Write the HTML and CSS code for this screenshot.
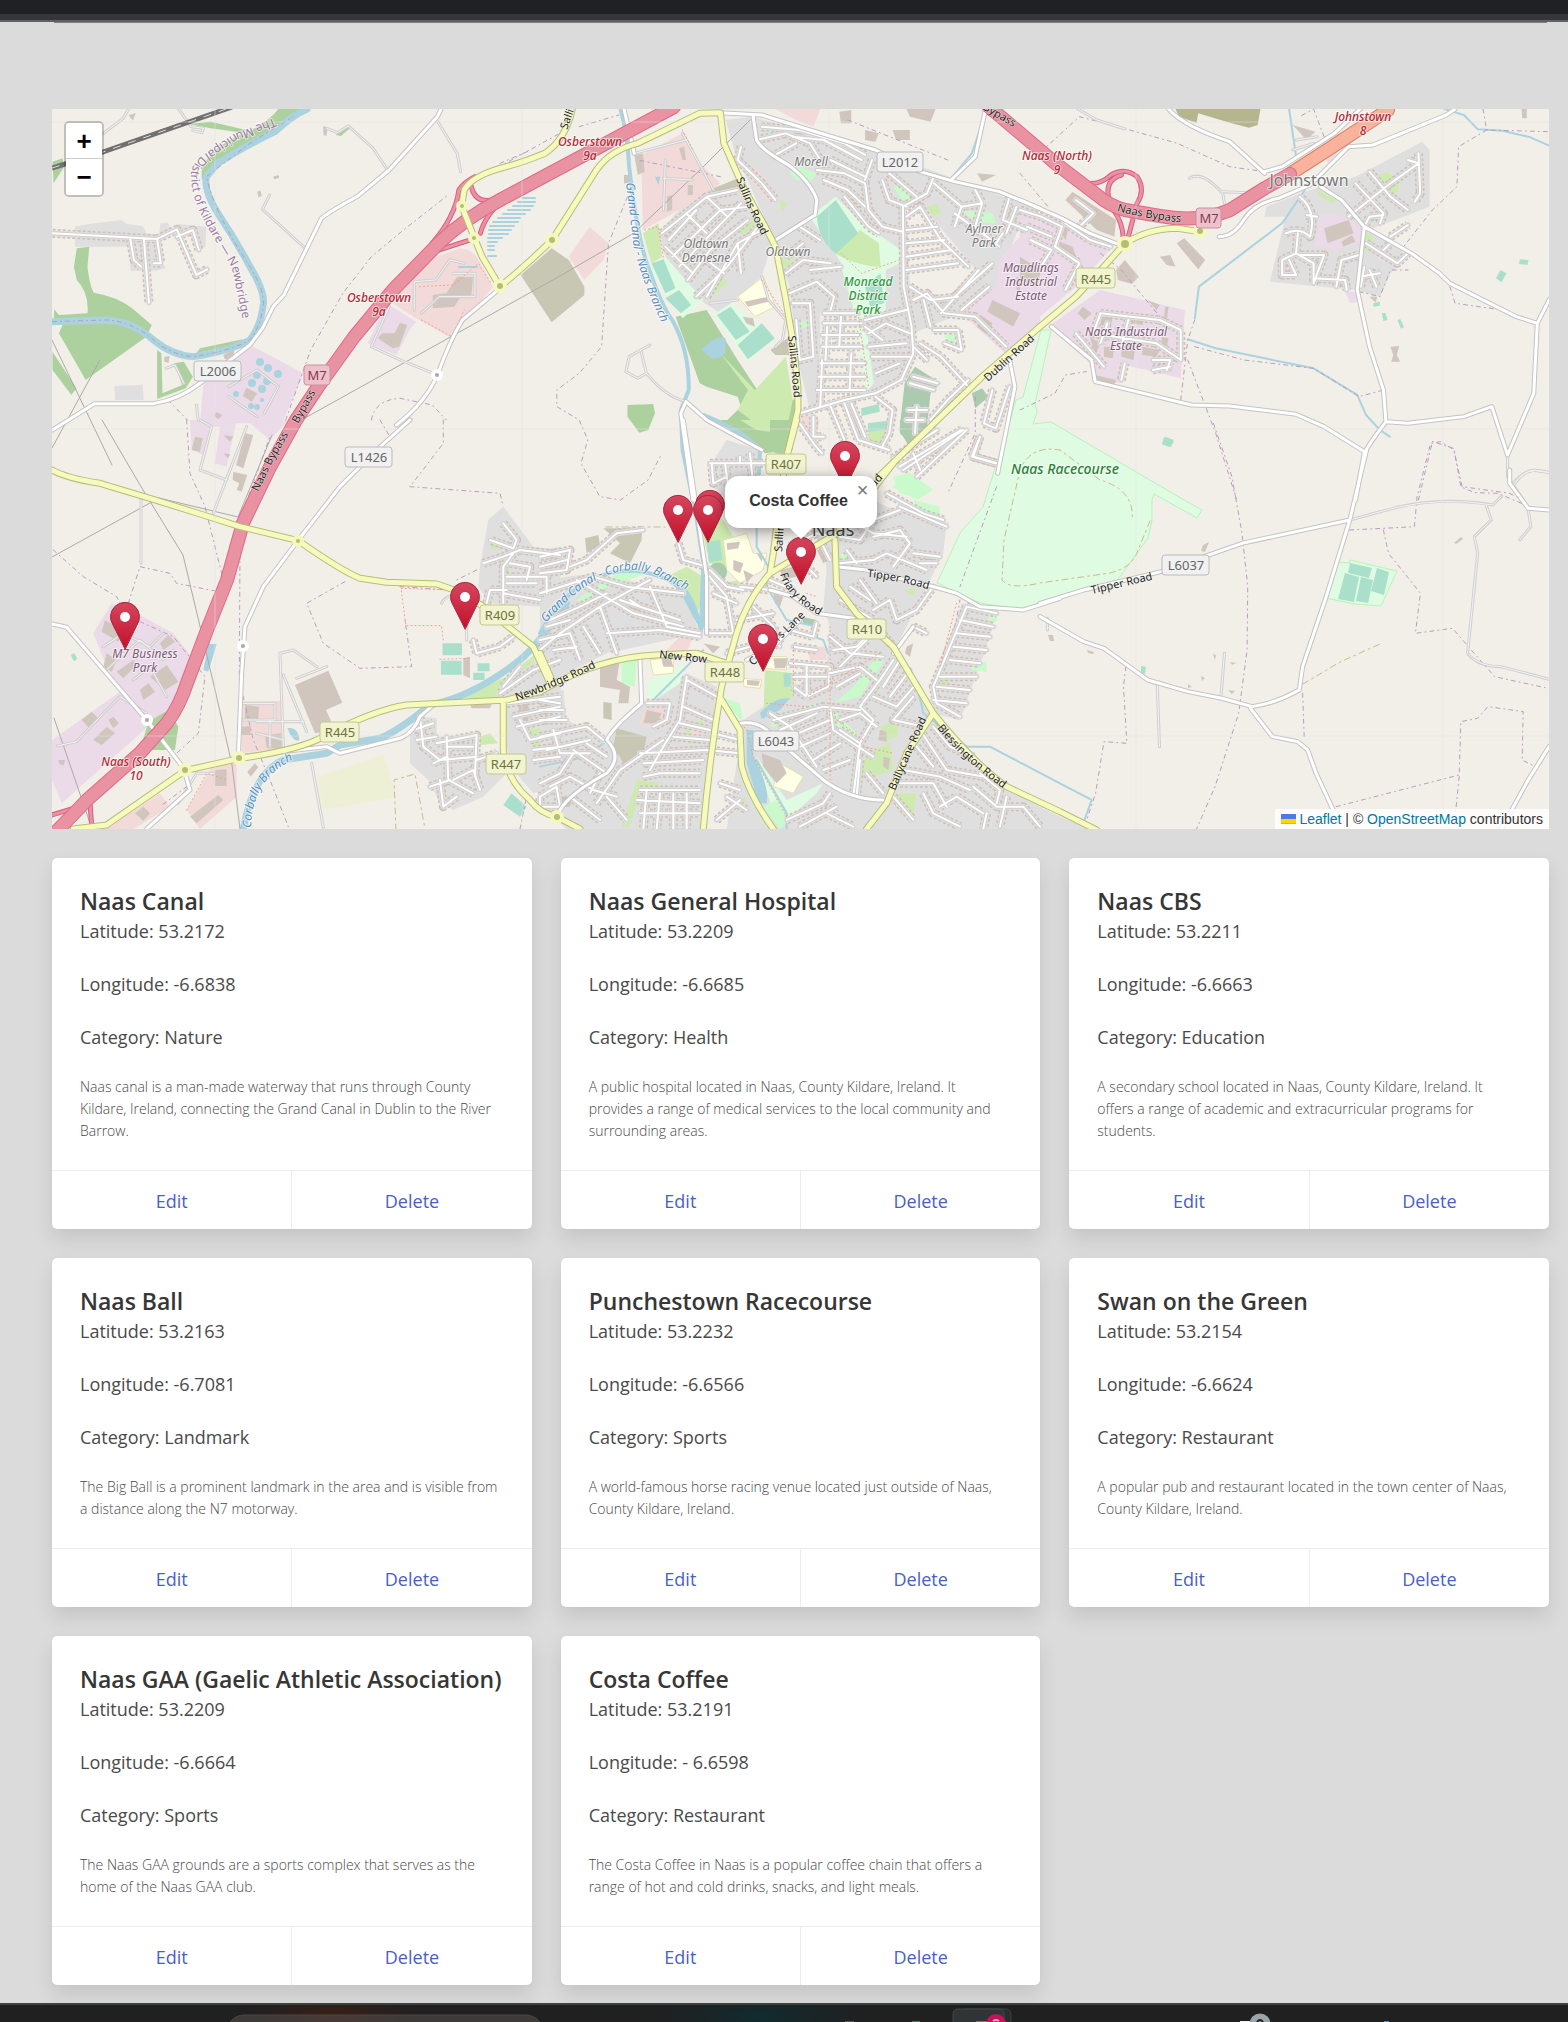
FILE: index.html
```html
<!DOCTYPE html>
<html lang="en">
<head>
<meta charset="utf-8">
<meta name="viewport" content="width=device-width, initial-scale=1">
<title>Naas places</title>
<link rel="stylesheet" href="styles.css">
</head>
<body>
<div class="browser-edge"><div class="browser-tabs"></div><div class="browser-line"></div></div>
<main class="page">
<div class="hero-edge"></div>
<section class="map" aria-label="Map of Naas">
<svg class="map-canvas" viewBox="52 109 1497 720" preserveAspectRatio="xMidYMid slice" role="img" aria-label="Street map">
<defs>
<linearGradient id="pin-fill" x1="0" y1="0" x2="0" y2="1"><stop offset="0" stop-color="#d5475e"/><stop offset="1" stop-color="#c3102a"/></linearGradient>
<g id="pin"><path d="M0 0L-12 -24A14.500 14.500 0 1 1 12 -24Z" fill="url(#pin-fill)" stroke="#a92840" stroke-width="1"/><circle cy="-32" r="5" fill="#fff"/></g>

<g id="streets">
<g transform="scale(.3571 .3333)"><path d="M147 700L440 717L495 688L550 825L580 808M403 717L417 908M495 710L540 690L557 750M365 717L375 780L395 800M440 717L450 790L430 790"/></g>
<g transform="translate(500 100) scale(.3444 .3333)"><path d="M470 400L530 350L600 290L690 270M490 420L570 330M500 470L640 330L720 320M520 500L700 310M545 540L610 450L720 360M570 590L660 500L745 385M600 590L690 430L760 390M690 430L700 520M540 340L600 400M600 290L660 350M480 440L560 520M600 480L650 520M700 140L690 180L760 250L800 300M745 120L830 100L900 130L930 180M790 170L860 130M760 80L870 90L1000 130L1060 165M850 110L940 120L1050 180M920 210L1000 220L1060 250L1070 330L1110 380L1170 395M940 240L1010 270L1060 320M1000 290L1070 380L1100 400M960 180L1060 230M1080 180L1060 240M1110 240L1130 300L1180 320M1130 220L1210 290M1170 320L1172 560L1195 680L1200 760L1165 840M1170 320L1240 280L1260 230M1260 250L1340 320L1400 310M1320 340L1440 430L1460 400M1340 320L1320 380M1400 310L1380 380L1450 440M1480 290L1460 360L1530 390M1380 270L1400 310M1500 320L1470 400M1180 350L1220 320L1280 420L1360 500M1180 390L1270 380M1180 430L1290 420M1180 470L1310 450M1180 510L1330 490M1190 560L1250 600L1330 590M1200 600L1240 580L1290 640L1380 650L1470 740M1230 600L1250 680M1260 690L1330 690L1340 750L1290 730M1220 730L1280 770L1360 860M1240 780L1200 740M1280 640L1390 510M1320 590L1430 490M1340 630L1420 560M830 520L880 480L960 490M840 580L920 545L970 590L960 630M850 610L900 610L910 770M860 660L870 780L910 770M880 430L830 470M870 380L930 420M900 510L990 500M1060 660L1180 630M1070 700L1120 670L1190 700M1070 740L1180 730M1080 770L1190 770M1090 820L1160 790M1060 680L1110 720M940 640L1040 640M940 670L1050 670M935 705L1040 705M935 740L1050 740M930 790L1060 790M925 830L1060 830M920 870L1060 870M950 680L945 780M990 650L985 740M1020 760L1015 870M870 940L1000 900L1090 880L1165 840M935 780L930 920M960 920L1000 1020M1000 910L1040 1020L1130 1050M1020 910L1060 1010M1090 890L1140 930L1130 1000L1110 1040M1140 1075L1270 990M1160 1100L1340 990M1200 1060L1220 1110M910 950L910 1010L940 1010M870 970L910 1030L935 1060M1390 1020L1370 1070L1440 1090M1430 870L1405 970L1440 985L1480 860M1360 840L1300 900L1250 960M1185 930L1240 930M1180 960L1230 960M1200 830L1270 850M1190 850L1260 870M1210 920L1205 1000"/></g>
<g transform="translate(1020 100) scale(.3495 .3333)"><path d="M1000 215L1060 290L1110 330M940 350L1060 250M960 250L1040 340L1030 370M1060 250L1140 190L1110 180M1140 160L1145 280L1130 305M1040 345L1000 350L985 380M990 430L1080 490L1110 460M1040 450L1060 430M760 400Q800 380 830 410Q850 330 800 290M795 400L790 460L840 490L840 550M790 460L750 480L750 525L790 525L770 480M840 550L870 465L800 465M840 535L930 540L935 570M905 560L920 480L970 465M970 530L1030 520M1000 510L1020 560M975 560L985 500M820 345L850 350M1060 410L1110 375M0 330L60 350L120 380L100 440M20 380L90 410M30 420L90 450L60 500M130 370L200 420L260 440M100 440L170 490L130 570M160 300L210 340L170 380M230 640L400 660L460 690L460 780M230 640L210 700L390 730L460 780M250 670L230 730M310 660L290 740M380 780L430 780L420 810M380 810L430 800M290 840L300 790M160 700L240 800"/></g>
<g transform="translate(40 420) scale(.3333)"><path d="M1390 310L1430 360L1420 385L1350 360M1330 430L1390 410L1440 390L1560 405M1390 550L1390 440L1420 400M1400 470L1520 470L1520 520M1400 490L1490 490M1410 430L1470 440L1460 480M1340 550L1350 510L1400 510M1390 520L1500 540M1300 660L1310 700L1380 680L1420 650M1380 820L1480 750L1560 720M1390 800L1440 740M1500 690L1560 640M1400 850L1560 830M1420 890L1560 860M1430 920L1560 890M1470 960L1560 940M1480 990L1560 980M1480 1020L1560 1010M1440 900L1470 960M1500 1130L1550 1100L1560 1160L1500 1160ZM1120 930L1180 910M1130 960L1190 950M1140 890L1150 980L1200 1020L1310 1010M1220 950L1225 1080L1300 1120M1180 1030L1220 1010M1190 970L1310 945L1305 1070M1170 1100L1230 1080M1200 1080L1210 1160L1250 1130M1240 1080L1300 1050L1320 1110M1220 980L1300 980M1310 1020L1370 1000"/></g>
<g transform="translate(540 420) scale(.3333)"><path d="M0 520L160 470L260 500L430 520M30 600L120 560L200 520M60 640L180 560L330 480M110 480L280 580L430 620M130 620L180 700M180 560L230 700M330 500L380 620L480 640M240 540L420 600M0 660L90 640L120 720M20 620L90 600M40 690L110 680M200 640L360 630L480 650M270 540L300 560M0 410L90 390L80 450L0 460M0 440L80 420M90 440L140 420L230 340L310 330M415 370L430 420L500 440M500 460L560 530L580 640L500 640M510 130L680 130M515 130L520 190L560 170M555 130L565 200M600 130L600 110M630 100L640 200M510 450L560 500L610 510M520 520L590 550M600 500L690 510M640 560L700 620L720 670M590 600L700 580M560 700L700 660L720 680M690 480L760 510M800 440L830 470M750 380L830 340L880 350M840 360L870 420M900 350L960 360L1000 300L1080 270M1000 350L1080 330L1110 370L1060 440M930 300L1000 340L1100 350M1120 400L1200 410M1140 430L1190 430M900 430L1000 420L1040 400L1160 450M920 390L950 430M1080 260L1220 320M1040 220L1150 280L1210 300M930 500L990 540M960 480L1010 550M1000 570L1050 540L1070 600L1130 570L1180 500M900 540L1000 600M870 650L930 700L1030 710M880 690L950 680L990 640M870 760L960 740L1010 780M890 800L960 760M750 630L820 650L830 610M750 730L870 740L865 800L800 830L760 800M800 740L800 830M760 770L860 770M760 680L830 690M1000 610L1060 680M1060 720L1020 780L960 860M980 660L900 740M1080 720L1030 800M1110 750L1050 830M1130 790L1070 860L1000 830M1120 830L1060 900L1150 920M960 860L1000 900L960 970M900 900L960 880L1010 920M900 930L960 970L940 1130M870 860L880 930L1000 1010M700 900L850 860L960 870M720 930L830 880M750 950L870 900M780 980L870 940M820 1020L900 970M850 1050L930 1020M690 880L750 920L830 1040M1280 560L1370 580M1260 600L1360 620M1250 640L1350 650M1240 680L1340 690M1230 720L1320 730M1200 770L1310 770M1190 800L1290 810M1180 840L1280 850M1280 560L1180 800L1190 850L1260 890M1180 920L1230 980L1300 1010M1140 930L1220 1050L1330 1070M1130 980L1180 1040M1090 1050L1200 1070L1290 1110M1080 1090L1180 1090L1220 1160M1060 1130L1120 1200M1150 1120L1180 1180L1260 1220M1200 1160L1250 1130L1330 1180M1320 1060L1380 1110L1370 1150M1300 1100L1370 1160L1450 1160L1500 1220M1400 1130L1380 1220M1340 1180L1330 1227M960 1020L950 1130M980 1060L1030 1120M0 840L60 850M0 870L70 870M0 900L80 900M0 950L140 920L190 960M20 990L150 960M40 930L60 1000L150 1000M0 1090L60 1060L100 1000M30 1100L90 1070L160 1110L230 1130M90 1130L180 1200M100 990L200 1060M140 970L200 1010M150 1120L180 1060M170 1150L240 1050L370 960M200 1130L260 1200M300 1000L500 990M310 1030L490 1020M310 1070L360 1060L480 1060M300 1110L480 1110M290 1140L480 1150M300 1180L480 1180M320 1110L310 1227M360 1120L350 1227M400 1120L400 1227M440 1120L440 1227M440 770L420 900L370 980L330 1050M440 780L530 830M430 860L520 900M420 910L510 930M400 950L510 960M320 850L390 850L380 900L340 920M530 1200L600 1140M540 1090L600 1110M560 1130L620 1170M740 1200L850 1150L870 1120M780 1220L890 1160M860 1180L940 1220M500 990L600 1000M520 940L600 960M1090 150L1270 30M1130 170L1280 30M1320 50L1300 110L1370 130M1120 620L1160 640"/></g>
</g>

<g id="local-roads">
<g transform="scale(.3571 .3333)"><path d="M290 400L345 355L360 327M500 327L535 380L570 385L565 398L540 392M1220 355L1280 460L1290 515M915 385L945 398L975 378L1045 445L1085 510M855 745L735 628L755 585M1225 1125L1125 1082L1040 1040L1090 920M1160 930L1160 845L1220 840L1260 780L1300 790M1180 940L1230 890L1330 890L1330 820L1270 820M465 1105L490 1095L515 1150M550 1215L555 1260M640 1160L720 1110L780 1160L740 1240M640 1190L720 1250"/></g>
<g transform="translate(500 100) scale(.3444 .3333)"><path d="M435 735L375 770L365 815L400 835L425 820L410 755M425 820Q480 890 540 905M390 160L540 120M480 180L475 330M475 235L560 240M530 100L620 270M760 530L780 600L830 660L820 720L800 740M610 610L690 600"/></g>
<g transform="translate(1020 100) scale(.3495 .3333)"><path d="M485 235Q520 210 580 280L585 310M580 275L650 278L710 240M165 27L220 60L300 87M1410 1160Q1440 1110 1475 1112L1514 1118M1395 1065L1395 1130L1440 1200M790 120L850 110M780 150L840 130"/></g>
<g transform="translate(40 420) scale(.3333)"><path d="M303 240L303 430M815 1030L850 1222M1205 550Q1210 530 1260 520M1280 580L1280 660M480 0L515 20L480 150L560 180M620 20L520 280M190 680L250 640L330 680L370 640M230 720L300 660L370 720L400 690M280 780L330 740L380 830M200 750L250 700M52 978L110 965L190 880L240 830L320 880M720 700L760 690L830 740M720 700L730 980M730 765L800 935M770 775L860 740M610 850L705 850L705 900L610 900M650 905L790 905M650 940L730 960M690 900L690 980M415 1150L470 1060L520 1060"/></g>
<g transform="translate(1040 420) scale(.3367 .3333)"><path d="M920 300L1060 262Q1200 230 1345 255L1370 230M1325 255L1340 300L1290 350L1300 400L1270 700Q1300 740 1370 740L1512 778M1450 270L1458 320L1425 360M1405 190Q1440 150 1470 150L1512 157M348 790L355 980M548 700L537 835M22 595L22 630"/></g>
</g>

<g id="white-roads">
<g transform="scale(.3571 .3333)"><path d="M147 1290L265 1211L430 1211Q500 1200 560 1150L700 1035L735 985L765 920L795 885L900 655Q930 630 1000 590L1090 510L1225 350L1235 327M1110 1275Q1190 1210 1225 1125Q1260 1020 1295 960L1400 865"/></g>
<g transform="translate(500 100) scale(.3444 .3333)"><path d="M735 50L745 120Q760 150 830 190Q900 240 920 300L915 345L800 420M640 38L760 45L900 90L1090 150L1220 215L1320 245L1450 275L1568 325M360 27L390 160M540 905L525 940L560 1200M540 905L600 960L760 1050M1480 780L1495 860L1445 1120M1410 27L1380 170L1310 240"/></g>
<g transform="translate(1020 100) scale(.3495 .3333)"><path d="M0 300L120 355L200 400L275 430M570 410Q610 410 640 360Q670 310 740 295L830 255L940 140L1010 135L1220 45L1245 27M700 215L750 200L900 100L990 10M425 27Q470 80 600 125L700 220M985 380L1120 460L1200 520L1230 550L1420 650L1480 670M1514 600L1480 670L1470 880L1395 1065M985 380L965 570L1000 740L1040 870L1047 965Q1000 1030 985 1060L960 1200M90 680L205 780L215 845L490 915L600 918L790 943L870 980L985 1055M1047 965L1110 970L1270 950L1350 920L1395 1065M860 260L920 300L985 380"/></g>
<g transform="translate(40 420) scale(.3333)"><path d="M1110 0L1010 90L900 200L775 360L670 500L615 620L605 760L595 1015M36 612L80 622L320 900L435 1050M435 1060L450 1110L320 1227M600 1010L860 980L900 1000L1080 955Q1120 940 1140 890L1180 855"/></g>
<g transform="translate(540 420) scale(.3333)"><path d="M890 440L980 450L1180 500L1250 520L1320 560L1450 570L1560 535M600 910Q660 900 700 950L850 1080Q930 1140 1030 1140M300 720L305 850Q220 920 200 960Q250 1010 200 1060Q90 1120 60 1170M1060 700L1120 620M430 0L500 470L500 640M690 510L760 530L830 580L940 595M620 720L700 680L780 600"/></g>
<g transform="translate(1040 420) scale(.3367 .3333)"><path d="M0 550L130 510L360 455L600 370L920 300M970 90L920 300L850 530L780 740L770 810Q700 850 630 860L540 835L440 815L320 780L190 685L130 665L0 590M1395 150L1395 190L1450 265L1512 270M625 865L690 950L765 965L795 990L820 1060L880 1190M1512 980L1450 1080L1370 1227"/></g>
</g>

<g id="yellow-roads">
<g transform="scale(.3571 .3333)"><path d="M1400 505Q1320 530 1300 570L1293 618L1328 713L1350 770L1400 860"/></g>
<g transform="translate(500 100) scale(.3444 .3333)"><path d="M210 27Q190 120 130 160Q60 190 0 205M0 560Q60 510 150 422L280 210Q320 150 400 130Q500 80 580 40L640 38L650 130L710 270L770 380L800 440L830 600L850 720L865 860L865 930L835 1060M1568 680L1400 830L1250 980L1100 1130"/></g>
<g transform="translate(1020 100) scale(.3495 .3333)"><path d="M300 430L240 500L160 590L80 660L50 686M300 430Q370 385 450 385L515 395"/></g>
<g transform="translate(40 420) scale(.3333)"><path d="M36 150Q80 175 180 190L330 235L490 285L600 320L775 362Q900 450 960 475L1040 487L1190 492L1270 520L1330 560Q1380 600 1480 680L1530 790M100 1227L200 1215L435 1052L600 1015Q780 990 850 950Q1000 870 1100 855L1400 840L1500 815M1390 845L1390 990Q1400 1080 1470 1140Q1500 1180 1550 1190"/></g>
<g transform="translate(540 420) scale(.3333)"><path d="M0 815Q180 710 350 705L470 700L560 730M50 1190L120 1227M0 700L40 790M770 0L735 130L700 400L690 460M1060 130L990 220L890 340L690 460Q620 540 590 640L545 800Q510 1000 490 1227M545 840L600 930L605 1040Q630 1130 700 1227M885 360L890 500L950 580L1060 680L1180 880Q1300 1030 1400 1100L1560 1175L1670 1230M1180 880L1100 1000L1040 1150L980 1227"/></g>
</g>
<g id="ramps">
<g transform="scale(.3571 .3333)"><path d="M1210 730Q1275 650 1285 570Q1300 545 1330 530M1320 560Q1330 610 1380 600L1500 535M1200 760L1330 715M1345 700Q1360 640 1420 590"/></g>
<g transform="translate(1020 100) scale(.3495 .3333)"><path d="M190 250Q230 255 260 225Q300 200 335 230Q360 270 335 310L310 410M255 300Q240 240 290 225M220 290Q290 330 295 410"/></g>
<g transform="translate(40 420) scale(.3333)"><path d="M36 1185L150 1150M150 1150L155 1215"/></g>
</g>
<path id="motorway" d="M674 107L500 200Q464 219 439 243L393 290L354 337L318 387L296 420L270 467L243 523L227 580L207 630L187 683Q180 705 167 723L140 753L87 800L56 832M988 106L1040 150L1055 163L1097 195Q1110 206 1125 210L1160 216Q1200 223 1230 210L1265 188L1290 174"/>
<path id="trunk" d="M1290 174L1335 145L1388 110"/>

<path id="t-municipal" d="M274 118L232 135L206 153Q189 164 191 180Q193 202 208 228L232 268L246 335"/>
<path id="t-sallins-a" d="M736 179L748 208L764 240"/>
<path id="t-sallins-b" d="M788 336L796 420"/>
<path id="t-naas-bypass" d="M258 492L274 459L302 412"/>
<path id="t-bypass" d="M298 424L322 381"/>
<path id="t-north-bypass" d="M1117 211Q1145 219 1195 224"/>
<path id="t-dublin" d="M988 382L1042 333"/>
<path id="t-tipper-a" d="M867 577Q900 580 940 593"/>
<path id="t-tipper-b" d="M1092 594L1164 577"/>
<path id="t-newbridge" d="M517 701Q550 690 620 656"/>
<path id="t-friary" d="M780 574Q786 600 832 622"/>
<path id="t-corban" d="M753 666L814 608"/>
<path id="t-ballycane" d="M895 791L934 702"/>
<path id="t-blessington" d="M937 728Q965 764 1020 800"/>
<path id="t-corbally-a" d="M546 623Q600 560 650 572L700 597"/>
<path id="t-naas-branch" d="M626 183L634 250Q645 290 670 340"/>
<path id="t-corbally-b" d="M251 828Q252 775 300 757"/>
</defs>

<rect x="52" y="109" width="1497" height="720" fill="#f2efe9"/>

<g class="land">
<g transform="scale(.3571 .3333)">
<path class="wood" d="M215 745L250 740L245 800Q250 850 262 878Q330 890 370 925L425 975L410 1010L240 1140L165 1000L175 975L150 970L152 928L165 945L245 940Q250 880 215 840L207 800ZM147 1055L214 1165L200 1185L147 1110ZM440 1050L452 1060L455 1180L510 1155L488 1090L515 1085L540 1130L520 1165L440 1197ZM780 327L860 327L770 400L690 430L590 500L565 540L565 500Q600 440 660 410Q740 380 780 327ZM530 372L590 365L690 390L680 398L590 385ZM147 485L175 475L180 500L150 550ZM550 1060L560 1045L680 1018L680 1030ZM940 405L975 378L980 385L955 408Z"/>
<path class="residential" d="M210 680L250 672L340 660L355 672L400 678L410 700L445 705L450 670L470 668L480 690L500 672L578 680L575 740L550 755L535 700L500 700L445 720L455 790L465 805L435 812L365 812L365 740L210 740ZM320 1158L400 1154L402 1200L322 1200Z"/>
<path class="industrial" d="M700 1035L850 1120L790 1270L560 1270L570 1150L640 1080ZM1080 908L1165 965L1150 985L1110 1065L1030 1030Z"/>
<path class="commercial" d="M1290 745Q1330 750 1345 790L1380 860L1265 1015L1165 955L1085 900L1220 770Z"/>
<path class="building" d="M1280 830L1325 832L1320 885L1290 890L1272 920L1212 925L1212 885L1250 880ZM1105 1000L1120 968L1140 975L1118 1040L1100 1045L1058 1015L1070 1000ZM690 1163L720 1180L705 1205L680 1188ZM605 1235L622 1245L612 1258L600 1248ZM765 530L780 525L782 533L768 538ZM720 575L730 572L733 588L724 592ZM625 1065L655 1050L655 1080L630 1078ZM460 1070L475 1068L472 1088L460 1085ZM360 345L380 340L372 362ZM905 378L918 382L914 408L906 405Z"/>
</g>
<g transform="translate(500 100) scale(.3444 .3333)">
<path class="residential" d="M655 60L730 50L1100 150L1250 210L1568 330L1500 400L1440 560L1340 640L1200 700L1190 830L1100 880L1050 900L900 930L865 780L840 560L800 430L680 150ZM460 400L520 330L620 260L700 240L790 430L760 530L690 590L640 640L580 600L500 540Z"/>
<path class="plain" d="M930 640L1030 640L1060 880L930 920ZM1180 330L1220 310L1390 520L1320 600L1190 560Z"/>
<path class="commercial" d="M410 165L530 100L560 170L640 250L520 330L415 390ZM710 215L745 205L800 280L780 305ZM200 470L260 380L315 430L300 480L245 540ZM870 950L900 945L900 990L875 990ZM800 27L930 27L910 80L860 60Z"/>
<path class="wood" d="M510 650L600 630L690 780L760 890L860 900L850 1050L770 1060L650 970L700 920L690 890L600 860L580 850ZM370 915L445 912L450 940L430 990L405 998L370 950Z"/>
<path class="grass" d="M415 400L460 370L470 470L440 490ZM640 760L740 870L830 770L850 900L830 1000L780 1000L690 930L720 870ZM590 580L650 530L660 550L600 600ZM690 380L740 350L740 380L700 405ZM810 300L835 310L820 335ZM1040 290L1065 290L1080 340L1065 345ZM1240 320L1270 310L1280 340L1260 350ZM820 470L850 470L850 500L820 500ZM1070 1000L1120 990L1095 1040Z"/>
<path class="park" d="M1140 260L1170 255L1195 295L1175 310ZM840 215L870 200L920 220L900 245L860 240ZM1340 330L1430 340L1440 370L1380 365ZM1290 710L1320 690L1335 715L1310 735ZM865 665L905 660L900 680L865 685ZM770 90L795 80L800 110L780 110ZM1140 1130L1190 1120L1230 1160L1210 1190L1160 1180Z"/>
<path class="meadow" d="M900 350L975 290L1050 370L1165 450L1160 490L1120 510L1120 640L1060 650L1085 850L1060 880L1030 640L985 480ZM430 500L480 470L590 600L530 655ZM620 645L670 610L800 715L720 785Z"/>
<path class="grass" d="M975 462L1045 390L1100 430L1105 500Q1040 500 975 462Z"/>
<path class="pitch" d="M440 490L475 478L510 565L480 580ZM480 595L520 570L555 615L525 640ZM630 645L670 620L725 695L685 720ZM690 735L760 670L798 715L720 778ZM920 350L975 300L1040 400L975 462Q925 420 920 350ZM1060 560L1105 520L1115 610L1075 620ZM1048 925L1100 912L1103 935L1050 948ZM1068 970L1125 962L1125 985L1068 992Z"/>
<path class="school" d="M690 590L765 530L800 620L740 650Z"/>
<path class="cemetery" d="M1175 850L1205 800L1280 850L1250 880L1240 980L1185 1035L1160 990ZM1370 880L1400 865L1418 890L1380 925Z"/>
<path class="brownfield" d="M60 525L150 445L200 480L245 560L245 585L150 667ZM785 750L835 715L840 765L800 765ZM610 270L690 235L695 260L620 280Z"/>
<path class="industrial" d="M1568 340L1450 480L1440 560L1340 640L1475 768L1568 690Z"/>
<path class="building" d="M390 165L415 160L420 215L400 225ZM985 35L1020 30L1020 70L990 70ZM1060 90L1100 100L1090 125L1060 120ZM1140 90L1190 90L1190 120L1150 120ZM1180 27L1265 27L1250 65L1190 50ZM1430 600L1510 640L1490 680L1415 635ZM1395 645L1430 670L1415 705L1385 680ZM1500 530L1568 570L1568 620L1500 570ZM710 605L780 590L780 605L720 620ZM1385 220L1440 225L1400 245ZM520 145L535 140L540 180L530 180ZM485 290L500 285L500 330L485 335ZM545 255L560 255L560 285L545 285ZM705 650L735 655L740 680L715 670ZM360 225L375 225L375 250L360 250Z"/>
<path class="water" d="M583 750Q630 700 655 715L655 760Q620 790 600 762ZM450 230L465 230L460 255Z"/>
</g>
<g transform="translate(1020 100) scale(.3495 .3333)">
<path class="industrial" d="M0 340L100 350L275 430L160 560L0 700ZM230 570L472 630L460 835L300 795L290 850L210 840L200 790L80 680Z"/>
<path class="residential" d="M960 230L1150 125L1172 150L1172 320L1010 385L1110 470L1060 520L1030 590L960 570L715 545L760 350L700 350L705 320L830 270Z"/>
<path class="industrial" d="M860 340L940 350L985 400L975 430L900 450L845 440ZM930 575L965 575L965 605L945 610Z"/>
<path class="brownfield olive" d="M445 27L688 27L680 75L655 83L600 68L510 40L505 68L455 50Z"/>
<path class="grass" d="M1025 225L1050 215L1085 240L1080 275L1060 285L1030 255ZM845 265L905 300L895 312L860 290ZM985 395L1010 410L1000 450L985 455Z"/>
<path class="commercial" d="M870 150L900 130L910 170L880 190Z"/>
<path class="building" d="M130 300L150 275L275 360L270 410L220 390ZM870 385L940 360L955 400L880 430ZM920 425L950 405L960 425L925 440ZM448 430L470 415L530 480L510 508ZM275 510L300 480L340 530L320 552L280 540ZM400 470L430 465L445 500L420 495ZM780 75L845 95L820 120ZM110 390L140 380L130 420ZM100 420L150 440L165 480L110 450ZM230 640L265 645L260 680L230 675ZM180 620L205 640L185 660L165 640ZM320 650L355 660L350 675L320 670ZM270 680L290 690L280 710ZM200 710L230 730L215 765ZM240 740L270 740L265 775L240 770ZM290 730L330 735L325 780L290 770ZM350 740L400 750L390 770L350 765ZM405 710L425 715L420 740L405 735ZM215 825L275 840L270 855L215 840ZM365 600L400 615L390 630ZM415 620L425 620L420 660L412 660ZM1060 740L1085 738L1078 765L1088 785L1062 785L1068 765ZM0 470L60 510L50 560L0 540ZM1000 590L1022 590L1018 608ZM1435 27L1450 27L1450 55L1437 55Z"/>
<path class="pitch" d="M415 1010L440 1020L432 1042L408 1032ZM1010 355L1028 347L1040 360L1028 375ZM1362 535L1375 510L1392 520L1378 547ZM1430 478L1455 480L1452 495L1428 492ZM1035 640L1045 638L1052 660L1040 663ZM1080 660L1088 657L1099 682L1090 686ZM1010 610L1030 605L1030 617L1012 620Z"/>
</g>
<g transform="translate(40 420) scale(.3333)">
<path class="residential" d="M1390 260L1480 380L1562 390L1562 520L1500 560L1350 550L1315 500L1320 440L1345 300ZM1380 820L1470 730L1510 620L1562 610L1562 1100L1480 1120L1420 1050L1400 980ZM1110 930L1150 890L1190 895L1190 950L1310 945L1315 1000L1390 1010L1400 1060L1330 1130L1240 1170L1200 1150L1165 1080L1110 1030Z"/>
<path class="industrial" d="M215 550L290 580L400 640L470 730L380 870L65 1150L36 1080L36 960L240 815L200 740L160 640ZM450 0L745 0L690 60L630 10L590 0L560 140L525 130L540 20L515 20L490 105L455 90Z"/>
<path class="commercial" d="M605 845L725 843L725 985L605 1000ZM515 1040L590 1030L590 1130L480 1227L440 1170ZM360 1120L390 1160L280 1227L200 1227Z"/>
<path class="farm" d="M830 1070L1030 1005L1070 1130L850 1170Z"/>
<path class="wood" d="M325 905L385 870L415 920L405 990L300 990Z"/>
<path class="grass" d="M1250 835L1400 770L1490 700L1480 730L1380 800L1380 835ZM1350 370L1380 365L1385 385L1355 388ZM1395 430L1410 420L1400 510L1390 490ZM1320 950L1350 940L1375 970L1320 975ZM1460 930L1500 925L1525 1000L1490 1000ZM1530 535L1560 525L1560 560ZM1160 910L1180 900L1185 925L1165 930Z"/>
<path class="pitch" d="M1208 670h58v36h-58zM1203 722h62v42h-62zM1313 730h36v24h-36zM1300 758h34v22h-34zM1415 1120L1460 1160L1440 1190L1390 1155ZM92 705L102 699L112 716L102 724Z"/>
<path class="building" d="M765 795L865 752L907 848L858 870L885 930L825 940ZM615 40L640 45L610 145L588 135ZM465 50L488 55L480 95L455 90ZM580 155L622 165L605 215L590 210L598 190L578 180ZM550 45L580 50L570 65ZM550 100L570 103L565 115ZM195 600L245 630L235 665L185 635ZM360 670L385 645L405 665L370 690ZM330 770L380 735L415 785L375 810ZM300 810L325 790L345 815L310 840ZM200 700L230 720L215 755L190 740ZM230 755L280 720L290 735L250 775ZM125 900L155 875L175 895L145 922ZM160 960L200 920L225 940L185 975ZM205 900L220 890L237 910L220 925ZM615 855L657 860L655 900L615 900ZM675 945L725 940L725 985L680 985ZM605 920L632 918L632 945L605 945ZM525 1050L560 1048L560 1098L525 1098ZM450 1190L535 1125L550 1140L470 1210ZM285 1180L310 1160L330 1180L310 1203ZM622 1055L645 1030L655 1042L632 1070ZM1270 715L1290 710L1290 775L1270 765ZM1290 852L1355 852L1350 865L1295 865ZM1435 855L1465 850L1465 900L1440 905ZM55 1020L75 1020L72 1035L58 1033Z"/>
<path class="water" d="M505 672L530 672L505 755L490 750ZM742 925Q775 920 778 960Q760 970 742 925Z"/>
</g>
<g transform="translate(540 420) scale(.3333)">
<path class="residential" d="M0 390L60 380L95 400L90 440L0 470ZM0 500Q100 440 260 480L430 520L480 640L200 700L40 780L0 700ZM830 260L920 200L1040 260L1220 310L1210 400L1120 580L1060 700L1190 900L1400 1110L1560 1190L1560 1227L560 1227L610 900L760 800L860 750L870 620L850 560L860 450ZM1265 550L1370 575L1340 680L1260 900L1180 880L1180 800ZM0 830L70 810L80 900L200 960L300 860L440 760L530 800L490 1227L80 1227L0 1150ZM515 130L560 60L660 90L660 200L700 240L560 240L520 200ZM1560 1190L1650 1227L1560 1227Z"/>
<path class="wood" d="M540 0L750 0L735 110L660 80L570 30ZM280 0L330 0L325 30L295 35Z"/>
<path class="grass" d="M600 0L690 0L690 35L650 30ZM500 280L550 300L580 350L590 450L510 430L490 350ZM380 470L440 440L490 470L480 560L460 600L430 520ZM675 750L760 760L760 830L670 890ZM980 1000L1050 970L1060 1050L990 1075L960 1070ZM1070 1120L1130 1120L1120 1190L1080 1180ZM290 1080L370 1090L300 1110L270 1220L245 1220ZM1200 780L1230 770L1220 810L1190 800ZM440 910L490 900L480 970L440 970ZM1090 510L1130 505L1120 530ZM580 1140L620 1130L610 1160L580 1155ZM330 990L370 990L365 1020L335 1015ZM540 490L600 480L600 510L560 510ZM1020 920L1070 900L1075 950L1040 960ZM985 20L1040 40L1020 80L985 80Z"/>
<path class="park" d="M1055 200L1110 160L1180 210L1130 240ZM1120 240L1200 260L1195 320L1140 290ZM900 400L940 405L940 435L905 430ZM245 720L290 720L285 800L245 790ZM1290 725L1340 725L1340 755L1295 750ZM1350 570L1375 575L1370 605L1345 600ZM870 810L880 850L960 830L1040 710L1020 700L940 800L870 860L890 950L960 980L960 950L890 880ZM690 910L730 880L830 850L830 860L740 890L700 925ZM540 830L600 850L610 910ZM110 540L230 460L300 450L310 465L200 500L130 550Z"/>
<path class="meadow" d="M320 790L430 730L420 790L330 850ZM650 1010L740 1140L850 1090L830 1120L740 1200L700 1180Z"/>
<path class="park" d="M670 1160L710 1140L750 1200L720 1227Z"/>
<path class="school" d="M550 360L620 340L640 400L680 400L670 450L600 490L560 450ZM660 710L740 710L740 750L665 745ZM610 775L665 780L660 805L612 800ZM720 1030L790 1070L760 1120L700 1100ZM330 720L400 710L400 760L340 765Z"/>
<path class="commercial" d="M310 870L380 850L390 890L350 930L300 910ZM430 640L460 650L440 700L380 690ZM800 680L860 680L860 720L810 720ZM450 920L490 920L490 960L460 960ZM770 0L840 0L830 40L790 35Z"/>
<path class="cemetery" d="M1080 0L1150 0L1140 60L1110 70L1080 40ZM510 440A28 28 0 1 1 509 470ZM785 590L830 600L820 620L790 610ZM960 580L990 580L990 600L965 600Z"/>
<path class="pitch" d="M500 365L540 360L547 420L507 428ZM730 760L755 760L752 800L732 800ZM985 15L1040 5L1040 30L985 35Z"/>
<path class="brownfield" d="M190 325L305 325L305 360L270 430L210 400L240 370ZM135 355L175 345L180 375L140 400ZM230 925L320 950L310 1000L260 1045L220 980ZM70 1130L100 1120L90 1160L60 1160ZM190 845L215 850L215 900L190 895Z"/>
<path class="building" d="M665 1000L720 1020L740 1060L710 1090L670 1040ZM180 740L240 720L230 780L270 800L265 850L235 850L240 810L180 800ZM580 420L610 430L600 460L580 450ZM610 450L640 465L620 490ZM360 700L385 690L400 740L370 740ZM1020 930L1040 935L1040 965L1015 960ZM830 390L860 380L880 410L850 430ZM1030 1010L1050 1015L1045 1050L1030 1040ZM320 870L365 880L350 910L310 910ZM700 715L745 715L735 745L705 745ZM490 670L540 680L520 700ZM620 780L660 782L655 798L622 795ZM720 450L760 440L770 470L730 480ZM1100 680L1120 670L1110 710L1095 700ZM650 400L670 405L665 425ZM700 520L730 530L720 560L705 550ZM560 370L600 365L595 385L562 390Z"/>
<path class="water" d="M660 880Q700 830 750 835L720 870L665 898ZM620 930L640 930L640 1010Q690 1100 680 1150L655 1150L620 1030ZM415 490Q450 500 480 590L500 460L500 600L480 655L470 590Z"/>
</g>
<path class="racecourse" d="M1041 330L1051 330L1035 404L1037 412L1033 424L1051 422L1184 500L1202 510L1197 518L1154 494L1152 500L1152 520L1148 538L1116 582L1040 602L1023 610L980 603L937 583L960 533L983 507L1010 420L1016 400L1023 397Z"/>
<path class="racecourse" d="M1339 562L1350 563L1350 560L1397 571L1381 606L1354 604L1326 598Z"/>
<path class="pitch" d="M1350 563L1372 568L1369 578L1348 573ZM1345 573L1359 577L1354 602L1338 599ZM1361 577L1373 580L1368 603L1356 601ZM1377 568L1389 572L1384 595L1371 591ZM1164 437L1174 442L1169 447L1162 444ZM1141 666L1146 667L1145 674L1141 673Z"/>
<path class="building" d="M1203 545L1209 542L1205 552L1201 551ZM1454 543L1461 537L1463 539L1456 544ZM1048 635L1053 635L1054 641L1050 641ZM1087 650L1094 652L1093 654L1088 653ZM1213 654L1216 655L1215 660ZM1230 662L1236 663L1232 665ZM1201 676L1205 678L1202 681ZM1228 690L1235 691L1232 694ZM1188 684L1192 687L1188 688Z"/>
</g>

<g class="waterways">
<g class="river" transform="scale(.3571 .3333)"><path d="M860 327Q820 345 770 395Q700 430 610 490L578 530Q570 570 610 640Q660 720 700 800Q740 870 738 910Q730 980 700 1020Q640 1055 540 1070Q480 1065 430 1020Q370 965 300 960L147 965"/></g>
<g class="river" transform="translate(40 420) scale(.3333)"><path d="M1580 550Q1490 680 1440 720Q1300 830 1170 855Q1080 930 1020 955L900 975L860 1000L730 1020Q640 1060 610 1227"/></g>
<g class="canal" transform="translate(500 100) scale(.3444 .3333)"><path d="M350 27Q370 100 375 200Q400 420 430 500Q470 620 500 660Q550 750 548 870L525 930L530 1050L560 1200M590 945Q720 1000 755 1050L752 1120"/></g>
<g class="canal" transform="translate(540 420) scale(.3333)"><path d="M455 200L490 430L482 650M0 640Q60 530 150 480Q260 430 360 470Q420 490 440 540L482 620"/></g>
<g class="stream" transform="translate(500 100) scale(.3444 .3333)"><path d="M1410 40L1370 160L1310 235"/></g>
<g class="stream" transform="translate(1020 100) scale(.3495 .3333)"><path d="M480 718L560 745L840 805L965 885L990 945L1030 990L1058 1010M500 655L512 560L750 370L815 270M1215 27L1270 45L1310 88L1380 92L1460 112L1514 137M770 27L790 170"/></g>
<g class="stream" transform="translate(540 420) scale(.3333)"><path d="M680 500L740 600L830 620M820 650L850 660L865 700M490 690L440 740L330 850M190 970L140 1010L0 1040M650 230L650 380L685 440L680 500M1130 790L1150 880L1280 980L1350 980L1560 1090L1655 1140L1630 1210M1350 1080L1470 1125M650 1020L740 1180L740 1227"/></g>
<g class="hatch"><path d="M523 198h12M518 202h17M513 206h20M508 210h22M503 214h22M498 218h22M493 222h25M490 226h24M489 230h22M489 234h19M488 238h14M488 242h9M488 246h6M488 250h6M488 256h8M459 267h18"/></g>
<g class="tanks" fill="#aad3df"><circle cx="260" cy="362" r="4"/><circle cx="268" cy="368" r="4"/><circle cx="278" cy="374" r="4"/><circle cx="257" cy="375" r="4"/><circle cx="267" cy="381" r="4"/><circle cx="252" cy="383" r="4"/><circle cx="262" cy="389" r="4"/><circle cx="236" cy="394" r="3"/><circle cx="262" cy="400" r="2"/><circle cx="251" cy="406" r="3"/><circle cx="257" cy="407" r="3"/></g>
</g>

<g class="lines boundary">
<g transform="scale(.3571 .3333)"><path d="M147 965L300 960Q370 965 430 1020Q480 1065 540 1070Q640 1055 700 1020Q730 980 738 910Q740 870 700 800Q600 640 578 530L700 430L820 350M800 1260L870 1050L960 880L1040 770L1130 690L1255 585M1040 1260Q1050 1200 1120 1195L1210 1215L1250 1260M1330 540L1568 400M470 1200L525 1260"/></g>
<g transform="translate(500 100) scale(.3444 .3333)"><path d="M0 190L90 150M230 80L345 45M370 290L315 430L295 740L230 820L165 870L165 920L230 960L255 1020L235 1090L290 1190L350 1200L430 1140L470 1060M640 230L400 180M1010 60L1300 180M1380 890L1380 1000L1300 1180"/></g>
<g transform="translate(1020 100) scale(.3495 .3333)"><path d="M60 155L170 50L280 80L450 130L600 200L700 215M0 220L80 320M230 460L290 510L400 650M0 930L100 880L130 825L190 815M460 900L480 720L500 660M480 780L560 1000L620 1200M500 740L640 780L840 805L970 890L1040 870M870 110L840 27L800 50M1325 27L1335 90L1514 95M1335 90L1255 140L1250 260L1180 330L1090 450M1230 560L1245 610L1380 630M970 575L1030 590L1060 510L1110 510M1140 1200L1180 1025L1240 1045L1265 1160L1400 1180L1440 1200"/></g>
<g transform="translate(40 420) scale(.3333)"><path d="M40 390L130 470L230 530L265 600M265 550L300 440L390 460L410 490L560 520M440 0L450 160L495 260L560 520L600 420L598 300M600 400L598 780L640 960L690 1080L745 1220M300 605L400 650L495 770L475 940L410 1000M1020 0L1050 50M1210 0L1210 70L1110 200L1380 220L1390 260M1310 450L1250 480M915 485L800 550L850 670L960 745L1115 740L1095 600M1080 500L1230 510M600 300L690 50M435 1060L440 1100L360 1160M1440 1227L1460 1130"/></g>
<g transform="translate(540 420) scale(.3333)"><path d="M1370 200L1260 500M1230 700L1260 540"/></g>
<g transform="translate(1040 420) scale(.3367 .3333)"><path d="M515 10L570 170L600 340L617 500L615 690L590 880L520 1100L465 1227M920 330L1020 325L1112 320L1120 230L1160 70L1190 65L1230 90L1250 200L1290 218L1360 220L1430 250M1020 330L1035 400L1130 520L1115 640L1225 625L1350 770L1500 803M255 740L248 800L258 970L190 965L165 1120L130 1227M780 820L785 960M880 1160L1245 1065L1250 905L1300 895L1330 860L1435 875L1432 1020L1470 1040M1245 1070L1230 1220"/></g>
</g>
<g class="lines tracks"><path d="M1150 521L1136 555Q1130 568 1110 573L1040 583Q1010 590 1002 580L1004 540L1020 470Q1030 445 1060 450L1100 480Q1135 490 1132 520M1303 684L1340 662L1380 644M396 830L394 780L415 774L425 829M606 527L665 527"/></g>
<g class="lines power"><path d="M305 418L560 276L634 233L702 168L750 120M52 448L100 360M52 557L159 498L238 517L272 435M102 420L143 490L183 555L199 622L216 694L232 765L240 829M52 340L112 465M54 718L92 829"/></g>

<use href="#streets" class="houses"/>
<use href="#streets" class="gardens"/>
<use href="#local-roads" class="street-case thin"/>
<use href="#local-roads" class="street-fill thin"/>
<use href="#streets" class="street-case"/>
<use href="#streets" class="street-fill"/>
<g class="lines paths"><g transform="translate(540 420) scale(.3333)"><path d="M760 680L760 830M870 620L870 1080M800 830L1020 700M540 840L620 930L640 1010L740 1190M890 900L970 960M1250 550L1200 740M680 850L800 860M970 980L1060 1000M800 520L830 530"/></g><g transform="translate(40 420) scale(.3333)"><path d="M1210 660L1205 617L1098 617L1083 505L1230 510M1200 718L1290 715M440 1170L500 1060L560 1080"/></g><g transform="translate(500 100) scale(.3444 .3333)"><path d="M990 460L1050 520L1160 480M1040 640L1070 860M420 390L460 380L475 480M530 90L560 150M760 540L830 650"/></g><g transform="scale(.3571 .3333)"><path d="M1175 860L1270 855L1340 790L1375 850M1180 960L1265 1010L1300 930"/></g></g>
<use href="#white-roads" class="white-case"/>
<use href="#white-roads" class="white-fill"/>
<path class="rail" d="M52 168L103 152L232 107"/><path class="rail-dash" d="M52 168L103 152L232 107"/>
<use href="#ramps" class="ramp-case"/>
<use href="#ramps" class="ramp-fill"/>
<use href="#trunk" class="motorway-case trunk-case"/>
<use href="#trunk" class="motorway-fill trunk-fill"/>
<use href="#motorway" class="motorway-case"/>
<use href="#motorway" class="motorway-fill"/>
<use href="#yellow-roads" class="yellow-case"/>
<use href="#yellow-roads" class="yellow-fill"/>
<g class="roundabouts"><circle cx="462" cy="206" r="2"/><circle cx="474" cy="238" r="2"/><circle cx="500" cy="286" r="3"/><circle cx="552" cy="240" r="3"/><circle cx="1125" cy="244" r="4"/><circle cx="1200" cy="231" r="3"/><circle cx="298" cy="541" r="2"/><circle cx="185" cy="770" r="3"/><circle cx="239" cy="758" r="3"/><circle cx="557" cy="817" r="3"/></g>
<g class="roundabouts white"><circle cx="437" cy="375" r="2"/><circle cx="243" cy="646" r="2"/><circle cx="147" cy="720" r="2"/></g>
<g class="seams"><path d="M215 109V829M522 109V829M829 109V829M1136 109V829M1443 109V829M52 122H1549M52 429H1549M52 736H1549"/></g>

<g class="labels">
<g class="exit"><text x="379" y="302">Osberstown<tspan x="379" dy="14">9a</tspan></text><text x="590" y="146">Osberstown<tspan x="590" dy="14">9a</tspan></text><text x="1057" y="160">Naas (North)<tspan x="1057" dy="14">9</tspan></text><text x="1363" y="121">Johnstown<tspan x="1363" dy="14">8</tspan></text><text x="136" y="766">Naas (South)<tspan x="136" dy="14">10</tspan></text></g>
<g class="suburb"><text x="811" y="166">Morell</text><text x="706" y="248">Oldtown<tspan x="706" dy="14">Demesne</tspan></text><text x="788" y="256">Oldtown</text><text x="984" y="233">Aylmer<tspan x="984" dy="14">Park</tspan></text></g>
<g class="green"><text x="868" y="286">Monread<tspan x="868" dy="14">District</tspan><tspan x="868" dy="14">Park</tspan></text></g>
<g class="estate"><text x="1031" y="272">Maudlings<tspan x="1031" dy="14">Industrial</tspan><tspan x="1031" dy="14">Estate</tspan></text><text x="1126" y="336">Naas Industrial<tspan x="1126" dy="14">Estate</tspan></text><text x="145" y="658">M7 Business<tspan x="145" dy="14">Park</tspan></text></g>
<text class="race" x="1065" y="474">Naas Racecourse</text>
<text class="village" x="1309" y="186">Johnstown</text>
<text class="town" x="833" y="536">Naas</text>
<g class="road-name">
<text><textPath href="#t-sallins-a">Sallins Road</textPath></text><text><textPath href="#t-sallins-b">Sallins Road</textPath></text>
<text><textPath href="#t-naas-bypass">Naas Bypass</textPath></text><text><textPath href="#t-bypass">Bypass</textPath></text><text><textPath href="#t-north-bypass">Naas Bypass</textPath></text>
<text><textPath href="#t-dublin">Dublin Road</textPath></text><text><textPath href="#t-tipper-a">Tipper Road</textPath></text><text><textPath href="#t-tipper-b">Tipper Road</textPath></text>
<text><textPath href="#t-newbridge">Newbridge Road</textPath></text><text x="659" y="658" transform="rotate(6 659 658)">New Row</text>
<text><textPath href="#t-friary">Friary Road</textPath></text><text><textPath href="#t-corban">Corban’s Lane</textPath></text>
<text><textPath href="#t-ballycane">Ballycane Road</textPath></text><text><textPath href="#t-blessington">Blessington Road</textPath></text>
<text x="567" y="130" transform="rotate(-70 567 130)">Sallins</text><text x="782" y="552" transform="rotate(-86 782 552)">Sallins</text>
<text x="866" y="498" transform="rotate(-50 866 498)">Road</text><text x="982" y="109" transform="rotate(30 982 109)">Bypass</text>
</g>
<g class="water-name"><text><textPath href="#t-corbally-a">Grand Canal - Corbally Branch</textPath></text><text><textPath href="#t-naas-branch">Grand Canal - Naas Branch</textPath></text><text><textPath href="#t-corbally-b">Corbally Branch</textPath></text></g>
<g class="admin-name"><text><textPath href="#t-municipal">The Municipal District of Kildare — Newbridge</textPath></text></g>
<g class="shield local"><rect x="194" y="361" width="47" height="20" rx="3"/><text x="218" y="376">L2006</text><rect x="877" y="152" width="46" height="20" rx="3"/><text x="900" y="167">L2012</text><rect x="345" y="447" width="47" height="20" rx="3"/><text x="369" y="462">L1426</text><rect x="753" y="731" width="46" height="20" rx="3"/><text x="776" y="746">L6043</text><rect x="1162" y="555" width="47" height="20" rx="3"/><text x="1186" y="570">L6037</text></g>
<g class="shield regional"><rect x="766" y="454" width="40" height="20" rx="3"/><text x="786" y="469">R407</text><rect x="1076" y="268" width="39" height="20" rx="3"/><text x="1096" y="284">R445</text><rect x="480" y="605" width="39" height="20" rx="3"/><text x="500" y="620">R409</text><rect x="320" y="722" width="39" height="20" rx="3"/><text x="340" y="737">R445</text><rect x="486" y="754" width="40" height="20" rx="3"/><text x="506" y="769">R447</text><rect x="705" y="662" width="39" height="20" rx="3"/><text x="725" y="677">R448</text><rect x="847" y="619" width="39" height="20" rx="3"/><text x="867" y="634">R410</text></g>
<g class="shield national"><rect x="304" y="365" width="26" height="20" rx="3"/><text x="317" y="380">M7</text><rect x="1196" y="208" width="25" height="20" rx="3"/><text x="1209" y="223">M7</text></g>
</g>

<g class="pins"><use href="#pin" x="845" y="488"/><use href="#pin" x="710" y="537"/><use href="#pin" x="678" y="542"/><use href="#pin" x="708" y="542"/><use href="#pin" x="801" y="584"/><use href="#pin" x="465" y="629"/><use href="#pin" x="125" y="649"/><use href="#pin" x="763" y="671"/></g>
</svg>
<div class="zoom"><button type="button" aria-label="Zoom in">+</button><button type="button" aria-label="Zoom out">−</button></div>
<div class="popup"><strong>Costa Coffee</strong><button type="button" aria-label="Close popup">×</button></div>
<div class="attribution"><svg width="15" height="10" viewBox="0 0 15 10" aria-hidden="true"><path fill="#4c7be1" d="M0 0h15v5H0z"/><path fill="#ffd500" d="M0 5h15v4H0z"/><path fill="#e0bc00" d="M0 9h15v1H0z"/></svg> <a href="#leaflet">Leaflet</a> | © <a href="#osm">OpenStreetMap</a> contributors</div>
</section>

<section class="cards">
<article class="card"><div class="card-body"><h2>Naas Canal</h2><p>Latitude: 53.2172</p><p>Longitude: -6.6838</p><p>Category: Nature</p><p class="note">Naas canal is a man-made waterway that runs through County Kildare, Ireland, connecting the Grand Canal in Dublin to the River Barrow.</p></div><footer><a href="#edit">Edit</a><a href="#delete">Delete</a></footer></article>
<article class="card"><div class="card-body"><h2>Naas General Hospital</h2><p>Latitude: 53.2209</p><p>Longitude: -6.6685</p><p>Category: Health</p><p class="note">A public hospital located in Naas, County Kildare, Ireland. It provides a range of medical services to the local community and surrounding areas.</p></div><footer><a href="#edit">Edit</a><a href="#delete">Delete</a></footer></article>
<article class="card"><div class="card-body"><h2>Naas CBS</h2><p>Latitude: 53.2211</p><p>Longitude: -6.6663</p><p>Category: Education</p><p class="note">A secondary school located in Naas, County Kildare, Ireland. It offers a range of academic and extracurricular programs for students.</p></div><footer><a href="#edit">Edit</a><a href="#delete">Delete</a></footer></article>
<article class="card"><div class="card-body"><h2>Naas Ball</h2><p>Latitude: 53.2163</p><p>Longitude: -6.7081</p><p>Category: Landmark</p><p class="note">The Big Ball is a prominent landmark in the area and is visible from a distance along the N7 motorway.</p></div><footer><a href="#edit">Edit</a><a href="#delete">Delete</a></footer></article>
<article class="card"><div class="card-body"><h2>Punchestown Racecourse</h2><p>Latitude: 53.2232</p><p>Longitude: -6.6566</p><p>Category: Sports</p><p class="note">A world-famous horse racing venue located just outside of Naas, County Kildare, Ireland.</p></div><footer><a href="#edit">Edit</a><a href="#delete">Delete</a></footer></article>
<article class="card"><div class="card-body"><h2>Swan on the Green</h2><p>Latitude: 53.2154</p><p>Longitude: -6.6624</p><p>Category: Restaurant</p><p class="note">A popular pub and restaurant located in the town center of Naas, County Kildare, Ireland.</p></div><footer><a href="#edit">Edit</a><a href="#delete">Delete</a></footer></article>
<article class="card"><div class="card-body"><h2>Naas GAA (Gaelic Athletic Association)</h2><p>Latitude: 53.2209</p><p>Longitude: -6.6664</p><p>Category: Sports</p><p class="note">The Naas GAA grounds are a sports complex that serves as the home of the Naas GAA club.</p></div><footer><a href="#edit">Edit</a><a href="#delete">Delete</a></footer></article>
<article class="card"><div class="card-body"><h2>Costa Coffee</h2><p>Latitude: 53.2191</p><p>Longitude: - 6.6598</p><p>Category: Restaurant</p><p class="note">The Costa Coffee in Naas is a popular coffee chain that offers a range of hot and cold drinks, snacks, and light meals.</p></div><footer><a href="#edit">Edit</a><a href="#delete">Delete</a></footer></article>
</section>
</main>
<div class="taskbar"><svg viewBox="0 0 1568 17" preserveAspectRatio="xMidYMin slice" aria-hidden="true">
<defs><radialGradient id="glow-red"><stop offset="0" stop-color="#3d1f16"/><stop offset="1" stop-color="#202020" stop-opacity="0"/></radialGradient><radialGradient id="glow-teal"><stop offset="0" stop-color="#0f2c30"/><stop offset="1" stop-color="#202020" stop-opacity="0"/></radialGradient></defs>
<rect width="1568" height="17" fill="#202020"/><ellipse cx="335" cy="10" rx="110" ry="40" fill="url(#glow-red)"/><ellipse cx="760" cy="12" rx="140" ry="40" fill="url(#glow-teal)"/>
<rect x="227" y="10" width="316" height="34" rx="17" fill="#5a5452" fill-opacity=".5" stroke="#4a4745"/>
<rect x="960" y="4" width="51" height="40" rx="5" fill="#2a2d2d" stroke="#3d4040"/><rect x="953" y="4" width="51" height="40" rx="5" fill="#303434" stroke="#454949"/>
<path d="M976 16h12v1h-12z" fill="#e0532f"/><circle cx="996" cy="19" r="10" fill="#c8115a"/><path d="M993 16q3-2 6 0" stroke="#f0a0c0" stroke-width="2" fill="none"/>
<path d="M1240 16h14v1h-14z" fill="#eee"/><circle cx="1260" cy="19" r="10.500" fill="#9aa5a9"/><path d="M1257 17q3-4 6 0" stroke="#222" stroke-width="2" fill="none"/>
<path d="M845 16h9v1h-9z" fill="#555"/><path d="M912 16h8v1h-8z" fill="#2d8a66"/><path d="M1384 16h5v1h-5z" fill="#2a9fd6"/></svg></div>
</body>
</html>
```
FILE: styles.css
```css
* { box-sizing: border-box; }
body {
  margin: 0;
  background: #dbdbdb;
  color: #4a4a4a;
  font-family: "Open Sans", "Noto Sans", sans-serif;
  font-size: 18px;
}
a { text-decoration: none; }
.browser-edge { background: #202124; padding-top: 14px; }
.browser-tabs { height: 6px; background: #35363a; }
.browser-line { height: 2px; background: #606165; }
.page { padding: 0 19px 18px 52px; }
.hero-edge { height: 1px; margin: 0 2px 86px; background: #8d7a74; }

/* Map */
.map { position: relative; height: 720px; overflow: hidden; font-family: "Liberation Sans", Arial, sans-serif; }
.map-canvas { display: block; width: 100%; height: 100%; }
.map-canvas path { vector-effect: non-scaling-stroke; }
.map-canvas use, .waterways, .lines, .seams { fill: none; stroke-linejoin: round; stroke-linecap: round; }
.wood { fill: #add19e; }
.residential { fill: #e0dfdf; }
.plain { fill: #f2efe9; }
.industrial { fill: #ebdbe8; }
.commercial { fill: #f2dad9; }
.grass { fill: #cdebb0; }
.park { fill: #c8facc; }
.meadow { fill: #dffce2; }
.pitch { fill: #aae0cb; }
.school { fill: #ffffe5; stroke: #e6dfb0; stroke-width: 1px; }
.cemetery { fill: #aacbaf; }
.brownfield { fill: #c7c7b4; }
.olive { fill: #b5b58e; }
.farm { fill: #eef0d5; }
.building { fill: #d0c6bd; }
.water { fill: #aad3df; }
.racecourse { fill: #dffce2; stroke: #b5f3b8; stroke-width: 1px; }
.river { stroke: #aad3df; stroke-width: 7px; }
.canal { stroke: #aad3df; stroke-width: 4px; }
.stream { stroke: #aad3df; stroke-width: 2px; }
.hatch { stroke: #aad3df; stroke-width: 2px; }
.tanks { stroke: none; }
.boundary { stroke: #b99cbd; stroke-width: 1px; stroke-dasharray: 4 4 1 4; }
.paths { stroke: #fa9a8c; stroke-width: 1px; stroke-dasharray: 1 3; }
.tracks { stroke: #cdb98a; stroke-width: 1px; stroke-dasharray: 6 4 2 4; }
.power { stroke: #aaa; stroke-width: 1px; }
.houses { stroke: #cfbfb4; stroke-width: 9px; stroke-dasharray: 3 2; }
.map-canvas .houses { stroke-linecap: butt; }
.gardens { stroke: #e0dfdf; stroke-width: 6px; }
.street-case { stroke: #d0cfcf; stroke-width: 4px; }
.street-fill { stroke: #fff; stroke-width: 2px; }
.street-case.thin { stroke-width: 3px; }
.street-fill.thin { stroke: #f4f4f4; stroke-width: 1px; }
.white-case { stroke: #c4c4c4; stroke-width: 5px; }
.white-fill { stroke: #fff; stroke-width: 3px; }
.rail { fill: none; stroke: #707070; stroke-width: 5px; }
.rail-dash { fill: none; stroke: #ddd; stroke-width: 1px; stroke-dasharray: 8 8; }
.ramp-case { stroke: #dc5a80; stroke-width: 5px; }
.ramp-fill { stroke: #e892a2; stroke-width: 3px; }
.motorway-case { stroke: #e0698a; stroke-width: 14px; }
.motorway-fill { stroke: #e892a2; stroke-width: 12px; }
.trunk-case { stroke: #d9826a; }
.trunk-fill { stroke: #f9b29c; }
.yellow-case { stroke: #b7bd76; stroke-width: 7px; }
.yellow-fill { stroke: #f7fabf; stroke-width: 5px; }
.roundabouts circle { fill: #b7bd76; stroke: #f5f8bd; stroke-width: 8px; paint-order: stroke; }
.roundabouts.white circle { fill: #aaa; stroke: #fff; }
.seams { stroke: #e6e6e6; stroke-width: 1px; stroke-opacity: .5; }

.labels { font: 12px "Noto Sans", "Open Sans", sans-serif; text-anchor: middle; stroke-linejoin: round; }
.labels text { paint-order: stroke; stroke: rgba(255, 255, 255, .6); stroke-width: 2px; }
.exit { fill: #b02a35; font-style: italic; font-weight: 500; }
.suburb { fill: #777; font-style: italic; }
.green { fill: #2f9640; font-style: italic; font-weight: 500; }
.estate { fill: #7d5879; font-style: italic; }
.race { fill: #2e7d3a; font-size: 14px; font-style: italic; font-weight: 500; }
.village { fill: #777; font-size: 16px; }
.town { fill: #444; font-size: 18px; }
.road-name { fill: #222; font-size: 11px; text-anchor: start; }
.labels .road-name text { stroke-width: 1px; }
.water-name { fill: #5b8fc0; font-style: italic; text-anchor: start; }
.admin-name { fill: #9b7a9f; text-anchor: start; }
.shield rect { stroke-width: 1px; }
.labels .shield text { stroke: none; font-size: 13px; }
.local { fill: #666; }
.local rect { fill: #f1f1f1; stroke: #bbb; }
.regional { fill: #6c7440; }
.regional rect { fill: #f2f3cf; stroke: #c3c893; }
.national { fill: #8a3850; }
.national rect { fill: #ecc3cd; stroke: #cf8fa0; }

.zoom {
  position: absolute; top: 12px; left: 12px;
  display: flex; flex-direction: column;
  border: 2px solid rgba(0, 0, 0, .2);
  border-radius: 5px;
  background-clip: padding-box;
}
.zoom button {
  width: 36px; height: 36px; padding: 0; border: 0;
  background: #fff; color: #000;
  font: bold 26px/36px "Liberation Sans", Arial, sans-serif;
}
.zoom button:first-child { border-bottom: 1px solid #ccc; border-radius: 3px 3px 0 0; }
.zoom button:last-child { border-radius: 0 0 3px 3px; }
.popup {
  position: absolute; left: 50%; bottom: 301px;
  width: 152px; height: 52px; margin-left: -76px; padding: 0 4px 2px 0;
  display: flex; align-items: center; justify-content: center;
  border-radius: 14px; background: #fff; color: #333;
  font-size: 16px;
  box-shadow: 0 3px 14px rgba(0, 0, 0, .4);
}
.popup::after {
  content: ""; position: absolute; top: 100%; left: 50%; margin-left: -11px;
  border: 11px solid transparent; border-top-color: #fff; border-bottom: 0;
}
.popup button {
  position: absolute; top: 2px; right: 2px;
  width: 24px; height: 24px; padding: 0; border: 0; background: none; color: #757575;
  font: 20px/24px "Liberation Sans", Arial, sans-serif;
}
.attribution {
  position: absolute; right: 0; bottom: 0;
  padding: 0 6px; background: rgba(255, 255, 255, .8); color: #333;
  font-size: 14px; line-height: 20px;
}
.attribution a { color: #0078a8; }

/* Cards */
.cards { display: grid; grid-template-columns: repeat(3, 1fr); gap: 29px; margin-top: 29px; }
.card {
  display: flex; flex-direction: column;
  border-radius: 5px; background: #fff;
  box-shadow: 0 10px 20px rgba(10, 10, 10, .1), 0 0 1px rgba(10, 10, 10, .1);
}
.card-body { flex: 1; padding: 29px 28px 28px; }
.card h2 { margin: 0 0 2px; color: #363636; font-size: 23px; font-weight: 600; line-height: 28px; }
.card p { margin: 0 0 24px; line-height: 29px; }
.card .note { margin: 0; font-size: 14px; font-weight: 300; line-height: 22px; }
.card footer { display: flex; border-top: 1px solid #ededed; }
.card footer a { flex: 1; padding: 16px 15px 14px; color: #485fc7; line-height: 28px; text-align: center; }
.card footer a + a { border-left: 1px solid #ededed; }

.taskbar { border-top: 2px solid #3e4241; background: #202020; }
.taskbar svg { display: block; width: 100%; height: 17px; }
```
